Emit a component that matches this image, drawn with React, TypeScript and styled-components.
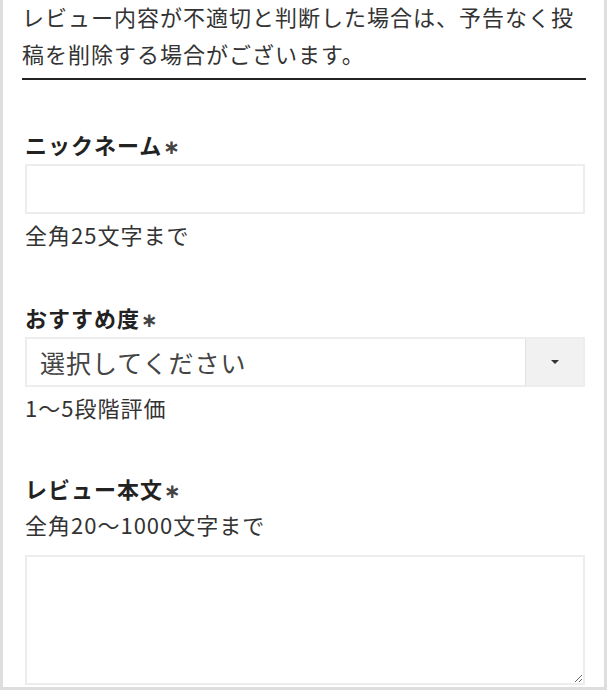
import styled, { createGlobalStyle } from 'styled-components';

const GlobalStyle = createGlobalStyle`
  html, body {
    margin: 0;
    padding: 0;
    background: #fff;
  }
  body {
    font-family: "Noto Sans CJK JP", "Noto Sans", sans-serif;
    color: #333;
  }
`;

const Panel = styled.div`
  box-sizing: border-box;
  width: 607px;
  height: 690px;
  border: 3px solid #dedede;
  border-top: none;
  padding: 0 18px 0 19px;
  display: flex;
  flex-direction: column;
  overflow: hidden;
`;

const Notice = styled.p`
  margin: -2px 0 0;
  padding-bottom: 6px;
  font-size: 22px;
  letter-spacing: 1px;
  line-height: 37px;
  color: #333;
  border-bottom: 2px solid #222;
`;

const Field = styled.div<{ $gap: number }>`
  display: flex;
  flex-direction: column;
  margin-top: ${({ $gap }) => $gap}px;
  padding: 0 1px 0 3px;
`;

const Label = styled.label`
  display: block;
  height: 36px;
  font-size: 22px;
  font-weight: 700;
  letter-spacing: 1px;
  line-height: 36px;
  color: #222;
`;

const Required = styled.span`
  font-family: "DejaVu Sans", sans-serif;
  font-size: 20px;
  line-height: 0;
  font-weight: 700;
  color: #444;
  margin-left: 1px;
`;

const Hint = styled.div<{ $gap?: number }>`
  font-size: 22px;
  letter-spacing: 1px;
  line-height: 36px;
  margin-top: ${({ $gap }) => $gap ?? 0}px;
  color: #333;
`;

const TextInput = styled.input`
  box-sizing: border-box;
  height: 50px;
  margin-top: 2px;
  border: 2px solid #ededed;
  background: #fff;
  font-family: inherit;
  font-size: 22px;
  padding: 0 14px;
  outline: none;
`;

const SelectWrap = styled.div`
  box-sizing: border-box;
  display: flex;
  height: 50px;
  margin-top: 2px;
  border: 2px solid #ededed;
  background: #fff;
`;

const Select = styled.select`
  flex: 1;
  appearance: none;
  border: none;
  background: transparent;
  font-family: inherit;
  font-size: 25px;
  letter-spacing: 1px;
  color: #444;
  padding: 0 0 0 13px;
  outline: none;
`;

const ArrowBox = styled.div`
  width: 57px;
  display: flex;
  align-items: center;
  justify-content: center;
  background: #f1f1f1;
  border-left: 1px solid #e2e2e2;
`;

const Caret = styled.span`
  width: 0;
  height: 0;
  border-left: 4px solid transparent;
  border-right: 4px solid transparent;
  border-top: 4px solid #333;
`;

const TextArea = styled.textarea`
  box-sizing: border-box;
  height: 130px;
  margin-top: 13px;
  border: 2px solid #ededed;
  background: #fff;
  font-family: inherit;
  font-size: 22px;
  outline: none;
`;

const App = () => (
  <>
    <GlobalStyle />
    <Panel>
      <Notice>
        レビュー内容が不適切と判断した場合は、予告なく投稿を削除する場合がございます。
      </Notice>

      <Field $gap={46}>
        <Label>
          ニックネーム<Required>∗</Required>
        </Label>
        <TextInput type="text" />
        <Hint $gap={2}>全角25文字まで</Hint>
      </Field>

      <Field $gap={47}>
        <Label>
          おすすめ度<Required>∗</Required>
        </Label>
        <SelectWrap>
          <Select defaultValue="">
            <option value="">選択してください</option>
            <option value="1">1</option>
            <option value="2">2</option>
            <option value="3">3</option>
            <option value="4">4</option>
            <option value="5">5</option>
          </Select>
          <ArrowBox>
            <Caret />
          </ArrowBox>
        </SelectWrap>
        <Hint $gap={2}>1～5段階評価</Hint>
      </Field>

      <Field $gap={45}>
        <Label>
          レビュー本文<Required>∗</Required>
        </Label>
        <Hint>全角20～1000文字まで</Hint>
        <TextArea />
      </Field>
    </Panel>
  </>
);

export default App;
